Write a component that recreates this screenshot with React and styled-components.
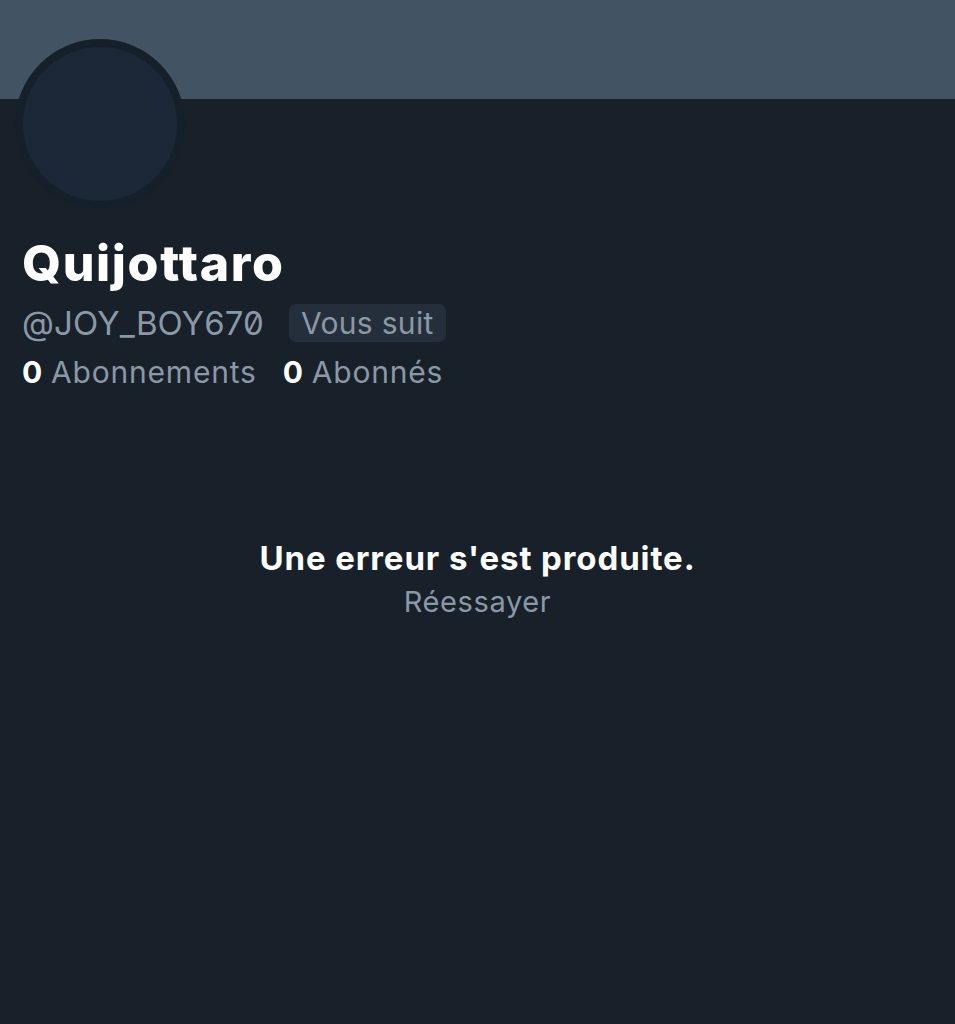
import React from "react";
import styled, { createGlobalStyle } from "styled-components";

const Global = createGlobalStyle`
  html, body { margin: 0; padding: 0; background: #18202a; }
  body { font-family: Inter, "Noto Sans", sans-serif; -webkit-font-smoothing: antialiased; }
`;

const Page = styled.div`
  width: 955px;
  height: 1024px;
  background: #18202a;
  display: flex;
  flex-direction: column;
  overflow: hidden;
`;

const Banner = styled.div`
  height: 99px;
  background: #425364;
  flex-shrink: 0;
`;

const Header = styled.div`
  padding: 0 0 0 15px;
  display: flex;
  flex-direction: column;
`;

const Avatar = styled.div`
  width: 154px;
  height: 154px;
  margin-top: -60px;
  border-radius: 50%;
  border: 8px solid #16202b;
  background: #1c2837;
`;

const Info = styled.div`
  padding-left: 7px;
  display: flex;
  flex-direction: column;
`;

const Name = styled.div`
  margin-top: 26px;
  font-size: 50px;
  line-height: 56px;
  font-weight: 800;
  color: #ffffff;
  letter-spacing: 1.6px;
`;

const HandleRow = styled.div`
  display: flex;
  align-items: center;
  gap: 25px;
  margin-top: 12px;
`;

const Handle = styled.span`
  font-size: 33px;
  line-height: 40px;
  color: #8b98a5;
  font-feature-settings: "zero" 1;
  letter-spacing: 0.1px;
`;

const Badge = styled.span`
  font-size: 30px;
  line-height: 38px;
  padding: 0 12px;
  border-radius: 7px;
  background: #252f3b;
  color: #8b98a5;
  letter-spacing: 0.3px;
`;

const Stats = styled.div`
  display: flex;
  gap: 26px;
  margin-top: 11px;
`;

const Stat = styled.span`
  font-size: 30px;
  line-height: 36px;
  color: #8b98a5;
  letter-spacing: 0.8px;
  b {
    color: #ffffff;
    font-weight: 700;
    margin-right: 8px;
  }
`;

const ErrorBox = styled.div`
  margin-top: 148px;
  display: flex;
  flex-direction: column;
  align-items: center;
`;

const ErrorTitle = styled.div`
  font-size: 33px;
  line-height: 40px;
  font-weight: 700;
  color: #ffffff;
  letter-spacing: 0.9px;
`;

const Retry = styled.div`
  margin-top: 6px;
  font-size: 29px;
  line-height: 36px;
  color: #8b98a5;
  letter-spacing: 0.6px;
`;

export default function App() {
  return (
    <Page>
      <Global />
      <Banner />
      <Header>
        <Avatar />
        <Info>
          <Name>Quijottaro</Name>
          <HandleRow>
            <Handle>@JOY_BOY670</Handle>
            <Badge>Vous suit</Badge>
          </HandleRow>
          <Stats>
            <Stat><b>0</b>Abonnements</Stat>
            <Stat><b>0</b>Abonnés</Stat>
          </Stats>
        </Info>
      </Header>
      <ErrorBox>
        <ErrorTitle>Une erreur s'est produite.</ErrorTitle>
        <Retry>Réessayer</Retry>
      </ErrorBox>
    </Page>
  );
}
